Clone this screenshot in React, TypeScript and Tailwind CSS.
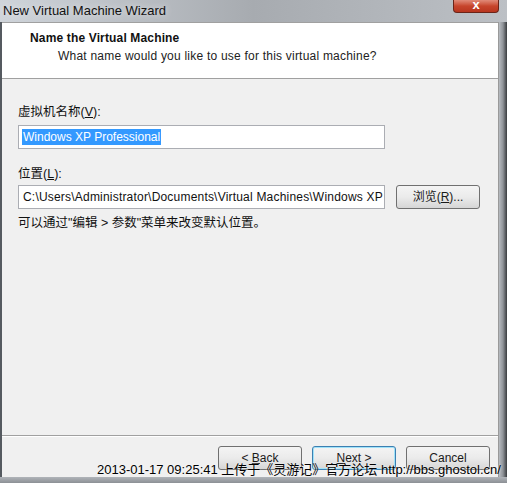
import React from "react";

const font = { fontFamily: '"Liberation Sans", Arial, "Noto Sans CJK SC", sans-serif' };

function Btn({ children, w = "w-[84px]", focus = false }: { children: React.ReactNode; w?: string; focus?: boolean }) {
  return (
    <div
      className={`${w} h-[24px] shrink-0 rounded-[3px] border ${focus ? "border-[#3c7fb1] shadow-[inset_0_0_0_1px_#9fe2f9]" : "border-[#707070]"} bg-gradient-to-b from-[#f4f4f4] via-[#ebebeb] to-[#d6d6d6] flex items-center justify-center text-[12px] text-[#1a1a1a] whitespace-pre`}
    >
      {children}
    </div>
  );
}

export default function App() {
  return (
    <div className="relative w-[507px] h-[483px] overflow-hidden bg-[#a9adb2]" style={font}>
      {/* title bar */}
      <div className="h-[22px] bg-gradient-to-r from-[#cfd4da] via-[#a7abb0] to-[#bcc0c5] flex items-start relative">
        <div className="pl-[3px] pt-[3px] text-[13px] text-[#111] leading-[16px] [text-shadow:0_0_6px_#e6e8ec]">New Virtual Machine Wizard</div>
        <div className="absolute left-[453px] top-0 w-[46px] h-[13px] rounded-b-[4px] border border-t-0 border-[#6b2418] bg-gradient-to-b from-[#e08a78] via-[#c7452c] to-[#b8361f] flex items-center justify-center">
          <span className="text-white font-bold text-[13px] leading-none -mt-[4px]">x</span>
        </div>
      </div>
      {/* window body */}
      <div className="flex h-[455px]">
        <div className="w-[2px] bg-[#555a60]" />
        <div className="w-[497px] flex flex-col bg-[#f0f0f0] border-r border-[#9a9a9a]">
          {/* header */}
          <div className="h-[57px] bg-white border-t border-b border-[#a0a0a0] pl-[28px] pt-[8px]">
            <div className="text-[12px] font-bold text-[#111] leading-[14px] tracking-[0.15px]">Name the Virtual Machine</div>
            <div className="text-[12px] text-[#222] leading-[14px] mt-[4px] pl-[28px] tracking-[0.22px]">What name would you like to use for this virtual machine?</div>
          </div>
          {/* content */}
          <div className="h-[356px] pl-[16px] pt-[26px] text-[12px] text-[#111]">
            <div className="leading-[14px] text-[12.5px]">虚拟机名称(<span className="underline">V</span>):</div>
            <div className="mt-[6px] w-[367px] h-[24px] border border-[#abadb3] bg-white flex items-center pl-[3px]">
              <span className="bg-[#3399ff] text-white px-[1px] leading-[16px]">Windows XP Professional</span>
            </div>
            <div className="leading-[14px] mt-[18px] text-[12.5px]">位置(<span className="underline">L</span>):</div>
            <div className="mt-[4px] flex items-center gap-[11px]">
              <div className="w-[367px] h-[24px] shrink-0 border border-[#abadb3] bg-white flex items-center pl-[4px] overflow-hidden whitespace-nowrap tracking-[0.2px]">
                C:\Users\Administrator\Documents\Virtual Machines\Windows XP Professional
              </div>
              <Btn w="w-[84px]">
                浏览(<span className="underline">R</span>)...
              </Btn>
            </div>
            <div className="leading-[14px] mt-[7px] text-[12.5px]">可以通过"编辑 &gt; 参数"菜单来改变默认位置。</div>
          </div>
          {/* separator + buttons */}
          <div className="h-[42px] border-t border-[#a0a0a0] shadow-[inset_0_1px_0_#ffffff] flex justify-end items-start pt-[10px] pr-[8px] gap-[10px]">
            <Btn>
              {"< "}
              <span className="underline">B</span>ack
            </Btn>
            <Btn focus>
              <span className="underline">N</span>
              {"ext >"}
            </Btn>
            <Btn>Cancel</Btn>
          </div>
        </div>
        <div className="flex-1 bg-gradient-to-r from-[#b8bcc1] via-[#8f9398] to-[#3a3d40]" />
      </div>
      <div className="h-[6px] bg-gradient-to-b from-[#b0b4b9] to-[#8c9095]" />
      {/* watermark */}
      <div className="absolute left-[97px] top-[462px] text-[13px] text-black leading-[16px] whitespace-nowrap [text-shadow:0_0_2px_#ffffff]">
        2013-01-17 09:25:41 上传于《灵游记》官方论坛 http://bbs.ghostol.cn/
      </div>
    </div>
  );
}
